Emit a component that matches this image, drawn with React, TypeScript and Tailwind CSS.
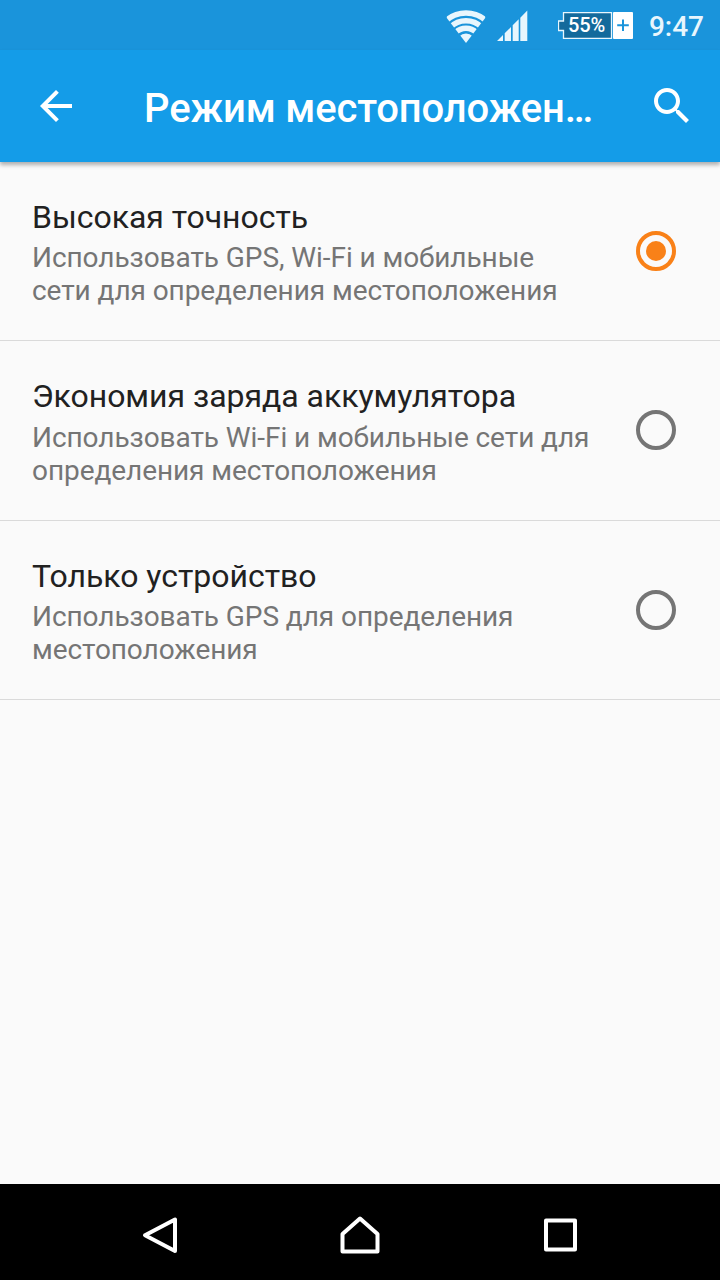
import React, { useState } from 'react';

interface LocationMode {
  id: string;
  title: string;
  summary: string[];
}

const modes: LocationMode[] = [
  { id: 'high', title: 'Высокая точность', summary: ['Использовать GPS, Wi-Fi и мобильные', 'сети для определения местоположения'] },
  { id: 'battery', title: 'Экономия заряда аккумулятора', summary: ['Использовать Wi-Fi и мобильные сети для', 'определения местоположения'] },
  { id: 'device', title: 'Только устройство', summary: ['Использовать GPS для определения', 'местоположения'] },
];

const StatusBar: React.FC = () => (
  <div className="h-[50px] shrink-0 bg-[#1a94db] flex items-center pr-4 justify-end text-[#e8f6fd]">
    {/* Wi-Fi */}
    <svg className="w-10 h-9 mr-[11px]" viewBox="0 0 40 36" fill="none" stroke="currentColor" strokeWidth={5.4}>
      <defs>
        <clipPath id="wifi-fan">
          <path d="M20 36L.8 11V0h38.400v11z" />
        </clipPath>
      </defs>
      <g clipPath="url(#wifi-fan)">
        <circle cx="20" cy="36" r="30" />
        <circle cx="20" cy="36" r="22.3" />
        <circle cx="20" cy="36" r="14.7" />
        <circle cx="20" cy="36" r="9.4" fill="currentColor" stroke="none" />
      </g>
    </svg>
    {/* Signal */}
    <svg className="w-[31px] h-8 mr-[30px]" viewBox="0 0 31 32" fill="currentColor">
      <path d="M0 32L6 26V32zM7.700 24.300L14 18V32H7.700zM15.700 16.300L21.700 10.300V32H15.700zM23.300 8.700L30.300 1.500V32H23.300z" />
    </svg>
    {/* Battery */}
    <div className="relative w-[75px] h-[27px] mr-4">
      <svg className="absolute inset-0 w-[75px] h-[27px]" viewBox="0 0 75 27">
        <path d="M5.500 .5H53.500V26.500H5.500V18.500H.5V9H5.500z" fill="#136a9c" stroke="#e8f6fd" strokeWidth={1.3} />
        <rect x="55" y="0" width="20" height="27" rx="1" fill="#fff" />
        <path d="M65 7.500v11.500M59.200 13.200h11.600" stroke="#1a94db" strokeWidth={2} />
      </svg>
      <span className="absolute left-[10px] top-0 text-xl leading-[27px] font-medium text-white">55%</span>
    </div>
    <span className="pt-[3px] text-[28px] leading-none font-medium">9:47</span>
  </div>
);

const Radio: React.FC<{ checked: boolean }> = ({ checked }) => (
  <svg className={`w-10 h-10 shrink-0 ${checked ? 'text-[#f98118]' : 'text-[#757575]'}`} viewBox="0 0 40 40">
    <circle cx="20" cy="20" r="18" fill="none" stroke="currentColor" strokeWidth={4} />
    {checked && <circle cx="20" cy="20" r="10" fill="currentColor" />}
  </svg>
);

const App: React.FC = () => {
  const [selected, setSelected] = useState('high');

  return (
    <div className="w-[720px] h-[1280px] flex flex-col bg-[#fafafa] overflow-hidden font-['Roboto',sans-serif]">
      <StatusBar />

      {/* Toolbar */}
      <header className="h-28 shrink-0 bg-[#149ce8] text-white flex items-center px-6 shadow-[0_3px_4px_rgba(0,0,0,0.3)]">
        <button className="ml-2">
          <svg className="w-12 h-12" viewBox="0 0 24 24" fill="currentColor">
            <path d="M20 11H7.830l5.590-5.590L12 4l-8 8 8 8 1.410-1.410L7.830 13H20v-2z" />
          </svg>
        </button>
        <h1 className="ml-16 flex-1 pt-[5px] text-[40px] leading-[48px] tracking-[-0.14px] font-medium whitespace-nowrap">Режим местоположен…</h1>
        <button>
          <svg className="w-12 h-12" viewBox="0 0 24 24" fill="currentColor">
            <path d="M15.500 14h-.79l-.28-.27C15.410 12.590 16 11.110 16 9.500 16 5.910 13.090 3 9.500 3S3 5.910 3 9.500 5.910 16 9.500 16c1.610 0 3.090-.59 4.230-1.570l.27.28v.79l5 4.990L20.490 19l-4.990-5zm-6 0C7.010 14 5 11.990 5 9.500S7.010 5 9.500 5 14 7.010 14 9.500 11.990 14 9.500 14z" />
          </svg>
        </button>
      </header>

      <main className="flex-1">
        {modes.map((mode) => (
          <div
            key={mode.id}
            onClick={() => setSelected(mode.id)}
            className="h-[179.3px] flex items-center justify-between pl-8 pr-11 border-b border-[#dadada]"
          >
            <div className="pt-[3px]">
              <div className="text-[32px] leading-[38px] tracking-[-0.03px] text-[#212121]">{mode.title}</div>
              <div className="mt-[5.3px] text-[28px] leading-[33px] tracking-[-0.07px] text-[#757575]">
                {mode.summary.map((line) => (
                  <div key={line} className="whitespace-nowrap">{line}</div>
                ))}
              </div>
            </div>
            <Radio checked={selected === mode.id} />
          </div>
        ))}
      </main>

      {/* Navigation bar */}
      <nav className="h-24 shrink-0 bg-black grid grid-cols-[200px_200px_200px] justify-center items-center justify-items-center pt-[7px]">
        <svg className="w-10 h-10" viewBox="0 0 40 40" fill="none" stroke="#fff" strokeWidth={4} strokeLinejoin="round">
          <path d="M35 3.500V35L5 19.300z" />
        </svg>
        <svg className="w-10 h-10" viewBox="0 0 40 40" fill="none" stroke="#fff" strokeWidth={4} strokeLinejoin="round">
          <path d="M20 2.500L37.500 18V35.500H2.500V18z" />
        </svg>
        <svg className="w-10 h-10" viewBox="0 0 40 40" fill="none" stroke="#fff" strokeWidth={4} strokeLinejoin="round">
          <rect x="6" y="4.500" width="29" height="29" />
        </svg>
      </nav>
    </div>
  );
};

export default App;
